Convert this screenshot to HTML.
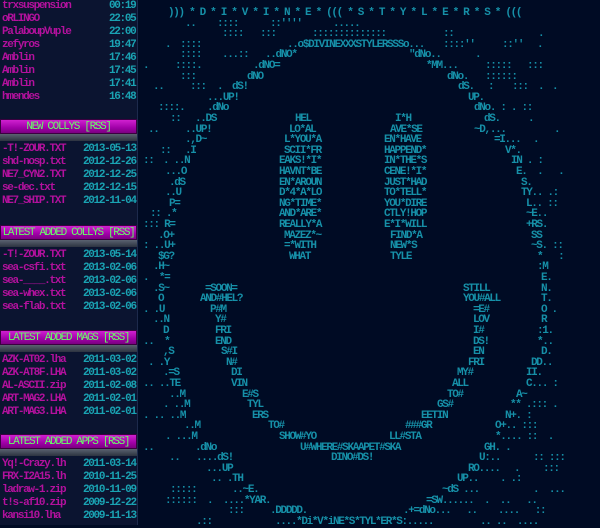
<!DOCTYPE html>
<html><head><meta charset="utf-8">
<style>
html,body{margin:0;padding:0;}
body{width:600px;height:525px;background:#000b24;overflow:hidden;position:relative;font-family:"Liberation Mono",monospace;font-size:11px;font-weight:bold;letter-spacing:-1.33px;}
#side{position:absolute;left:0;top:0;width:137px;height:525px;background:#0b1430;border-right:1px solid #1d2a4c;}
.r{position:absolute;height:13px;line-height:13px;white-space:pre;}
.n{color:#b3119d;}
.d{color:#1aa3b3;}
.hd{position:absolute;left:0;width:137px;height:15px;background:linear-gradient(#d020d0,#a000a8 60%,#7a0080);color:#66ff66;text-align:center;line-height:15px;border:1px solid #3a0040;box-sizing:border-box;font-weight:normal;}
.gb{position:absolute;left:0;width:137px;height:7px;background:linear-gradient(#5a6270,#2c3340);}
#art{position:absolute;left:0;top:0;width:600px;height:525px;color:#1690a8;}
#art i{position:absolute;font-style:normal;white-space:pre;line-height:10px;}
</style></head><body>
<div id="art">
<i style="left:168px;top:8px">))) * D * I * V * I * N * E * ((( * S * T * Y * L * E * R * S * (((</i>
</div>
<div id="side">
<div class="r n" style="left:2px;top:0px">trxsuspension</div><div class="r d" style="left:109px;top:0px">00:19</div>
<div class="r n" style="left:2px;top:13px">oRLINGO</div><div class="r d" style="left:109px;top:13px">22:05</div>
<div class="r n" style="left:2px;top:26px">PalaboupVuple</div><div class="r d" style="left:109px;top:26px">22:00</div>
<div class="r n" style="left:2px;top:39px">zefyros</div><div class="r d" style="left:109px;top:39px">19:47</div>
<div class="r n" style="left:2px;top:52px">Amblin</div><div class="r d" style="left:109px;top:52px">17:46</div>
<div class="r n" style="left:2px;top:65px">Amblin</div><div class="r d" style="left:109px;top:65px">17:45</div>
<div class="r n" style="left:2px;top:78px">Amblin</div><div class="r d" style="left:109px;top:78px">17:41</div>
<div class="r n" style="left:2px;top:91px">hmendes</div><div class="r d" style="left:109px;top:91px">16:48</div>

<div class="hd" style="top:119px">NEW COLLYS [RSS]</div><div class="gb" style="top:134px"></div>
<div class="r n" style="left:2px;top:143px">-T!-ZOUR.TXT</div><div class="r d" style="left:83px;top:143px">2013-05-13</div>
<div class="r n" style="left:2px;top:156px">shd-nosp.txt</div><div class="r d" style="left:83px;top:156px">2012-12-26</div>
<div class="r n" style="left:2px;top:169px">NE7_CYN2.TXT</div><div class="r d" style="left:83px;top:169px">2012-12-25</div>
<div class="r n" style="left:2px;top:182px">se-dec.txt</div><div class="r d" style="left:83px;top:182px">2012-12-15</div>
<div class="r n" style="left:2px;top:195px">NE7_SHIP.TXT</div><div class="r d" style="left:83px;top:195px">2012-11-04</div>

<div class="hd" style="top:225px">LATEST ADDED COLLYS [RSS]</div><div class="gb" style="top:240px"></div>
<div class="r n" style="left:2px;top:249px">-T!-ZOUR.TXT</div><div class="r d" style="left:83px;top:249px">2013-05-14</div>
<div class="r n" style="left:2px;top:262px">sea-csfi.txt</div><div class="r d" style="left:83px;top:262px">2013-02-06</div>
<div class="r n" style="left:2px;top:275px">sea-____.txt</div><div class="r d" style="left:83px;top:275px">2013-02-06</div>
<div class="r n" style="left:2px;top:288px">sea-whex.txt</div><div class="r d" style="left:83px;top:288px">2013-02-06</div>
<div class="r n" style="left:2px;top:301px">sea-flab.txt</div><div class="r d" style="left:83px;top:301px">2013-02-06</div>

<div class="hd" style="top:330px">LATEST ADDED MAGS [RSS]</div><div class="gb" style="top:345px"></div>
<div class="r n" style="left:2px;top:354px">AZK-AT02.lha</div><div class="r d" style="left:83px;top:354px">2011-03-02</div>
<div class="r n" style="left:2px;top:367px">AZK-AT8F.LHA</div><div class="r d" style="left:83px;top:367px">2011-03-02</div>
<div class="r n" style="left:2px;top:380px">AL-ASCII.zip</div><div class="r d" style="left:83px;top:380px">2011-02-08</div>
<div class="r n" style="left:2px;top:393px">ART-MAG2.LHA</div><div class="r d" style="left:83px;top:393px">2011-02-01</div>
<div class="r n" style="left:2px;top:406px">ART-MAG3.LHA</div><div class="r d" style="left:83px;top:406px">2011-02-01</div>

<div class="hd" style="top:434px">LATEST ADDED APPS [RSS]</div><div class="gb" style="top:449px"></div>
<div class="r n" style="left:2px;top:458px">Yq!-Crazy.lh</div><div class="r d" style="left:83px;top:458px">2011-03-14</div>
<div class="r n" style="left:2px;top:471px">FRX-I2A15.lh</div><div class="r d" style="left:83px;top:471px">2010-11-25</div>
<div class="r n" style="left:2px;top:484px">ladraw-1.zip</div><div class="r d" style="left:83px;top:484px">2010-11-09</div>
<div class="r n" style="left:2px;top:497px">t!s-af10.zip</div><div class="r d" style="left:83px;top:497px">2009-12-22</div>
<div class="r n" style="left:2px;top:510px">kansi10.lha</div><div class="r d" style="left:83px;top:510px">2009-11-13</div>
</div>
<script>
var L=[
[1,[[185,".."],[217,"::::"],[270,"::''''"],[333,"....."]]],
[2,[[222,"::::"],[260,":::"],[312,"::::::::::::::"],[443,"::"],[538,"."]]],
[3,[[165,"."],[180,"::::"],[287,"..o$DIVINEXXXSTYLERSSSo..."],[443,"::::''"],[502,"::''"],[537,"."]]],
[4,[[180,"::::"],[222,"...::"],[265,"..dNO*"],[409,"\"dNo.."],[475,"."]]],
[5,[[143,"."],[175,"::::."],[253,".dNO="],[426,"*MM..."],[485,":::::"],[527,":::"]]],
[6,[[180,":::"],[247,"dNO"],[447,"dNo."],[485,"::::::"]]],
[7,[[153,".."],[190,":::"],[217,"."],[232,"dS!"],[458,"dS."],[488,":"],[512,":::"],[538,"."],[552,"."]]],
[8,[[207,"...UP!"],[468,"UP."]]],
[9,[[158,"::::."],[207,".dNo"],[474,"dNo. : . ::"]]],
[10,[[170,"::"],[195,"..DS"],[295,"HEL"],[395,"I*H"],[484,"dS."],[528,"."]]],
[11,[[148,".."],[185,"..UP!"],[289,"LO*AL"],[390,"AVE*SE"],[474,"~D,..."],[554,"."]]],
[12,[[185,".,D~"],[284,"L*YOU*A"],[384,"EN*HAVE"],[494,"=I..."],[533,"."]]],
[13,[[160,"::"],[185,".I"],[284,"SCII*FR"],[384,"HAPPEND*"],[505,"V*."]]],
[14,[[143,"::"],[163,". ..N"],[279,"EAKS!*I*"],[384,"IN*THE*S"],[511,"IN . :"]]],
[15,[[165,"...O"],[279,"HAVNT*BE"],[384,"CENE!*I*"],[516,"E.  .   ."]]],
[16,[[169,".dS"],[279,"EN*AROUN"],[384,"JUST*HAD"],[521,"S."]]],
[17,[[165,"..U"],[279,"D*4*A*LO"],[384,"TO*TELL*"],[521,"TY.. .:"]]],
[18,[[169,"P="],[279,"NG*TIME*"],[384,"YOU*DIRE"],[526,"L.. ::"]]],
[19,[[150,":: .*"],[279,"AND*ARE*"],[384,"CTLY!HOP"],[526,"~E.."]]],
[20,[[143,"::: R="],[279,"REALLY*A"],[384,"E*I*WILL"],[526,"+RS."]]],
[21,[[158,".O+"],[284,"MAZEZ*~"],[390,"FIND*A"],[531,"SS"]]],
[22,[[143,": ..U+"],[284,"=*WITH"],[390,"NEW*S"],[531,"~S. ::"]]],
[23,[[158,"$G?"],[289,"WHAT"],[390,"TYLE"],[537,"*   :"]]],
[24,[[153,".H~"],[537,":M"]]],
[25,[[143,".  *="],[541,"E."]]],
[26,[[153,".S~"],[205,"=SOON="],[463,"STILL"],[541,"N."]]],
[27,[[158,"O"],[200,"AND#HEL?"],[463,"YOU#ALL"],[541,"T."]]],
[28,[[143,". .U"],[210,"P#M"],[473,"=E#"],[541,"O ."]]],
[29,[[153,"..N"],[215,"Y#"],[473,"LOV"],[541,"R"]]],
[30,[[163,"D"],[215,"FRI"],[473,"I#"],[537,":1."]]],
[31,[[143,"..  *"],[215,"END"],[473,"DS!"],[537,"*.."]]],
[32,[[163,",S"],[221,"S#I"],[473,"EN"],[541,"D."]]],
[33,[[148,". .Y"],[226,"N#"],[468,"FRI"],[531,"DD.."]]],
[34,[[163,".=S"],[231,"DI"],[457,"MY#"],[526,"II."]]],
[35,[[143,".. ..TE"],[231,"VIN"],[452,"ALL"],[526,"C... :"]]],
[36,[[169,"..M"],[242,"E#S"],[447,"TO#"],[516,"A~"]]],
[37,[[163,". ..M"],[247,"TYL"],[437,"GS#"],[510,"** .::: ."]]],
[38,[[143,". .. ..M"],[252,"ERS"],[421,"EETIN"],[505,"N+. :"]]],
[39,[[184,"..M"],[268,"TO#"],[405,"###GR"],[495,"O+.. :::"]]],
[40,[[165,". ...M"],[279,"SHOW#YO"],[389,"LL#STA"],[495,"*.... ::  ."]]],
[41,[[143,".."],[195,".dNo"],[300,"U#WHERE#SKAAPET#SKA"],[484,"GH. ."]]],
[42,[[169,".."],[196,"....dS!"],[331,"DINO#DS!"],[479,"U:.."],[533,":: :::"]]],
[43,[[206,"...UP"],[468,"RO...."],[514,"."],[543,":::"]]],
[44,[[211,".. .TH"],[457,"UP.."],[500,". .:"]]],
[45,[[170,":::::"],[232,"..~E."],[442,"~dS ..."],[533,".  ..."]]],
[46,[[165,"::::::"],[207,".  ....*YAR."],[426,"=SW......  .  ..   .."]]],
[47,[[228,":::"],[270,".DDDDD."],[403,".+=dNo...   ..    ....   ::"]]],
[48,[[196,".::"],[275,"....*Di*V*iNE*S*TYL*ER*S:....."],[480,".. ..  ...."]]]
];
var a=document.getElementById('art'),h='';
L.forEach(function(r){var t=(8+r[0]*10.6).toFixed(1);r[1].forEach(function(s){h+='<i style="left:'+s[0]+'px;top:'+t+'px">'+s[1].replace(/&/g,'&amp;').replace(/</g,'&lt;')+'</i>';});});
a.insertAdjacentHTML('beforeend',h);
</script>
</body></html>
